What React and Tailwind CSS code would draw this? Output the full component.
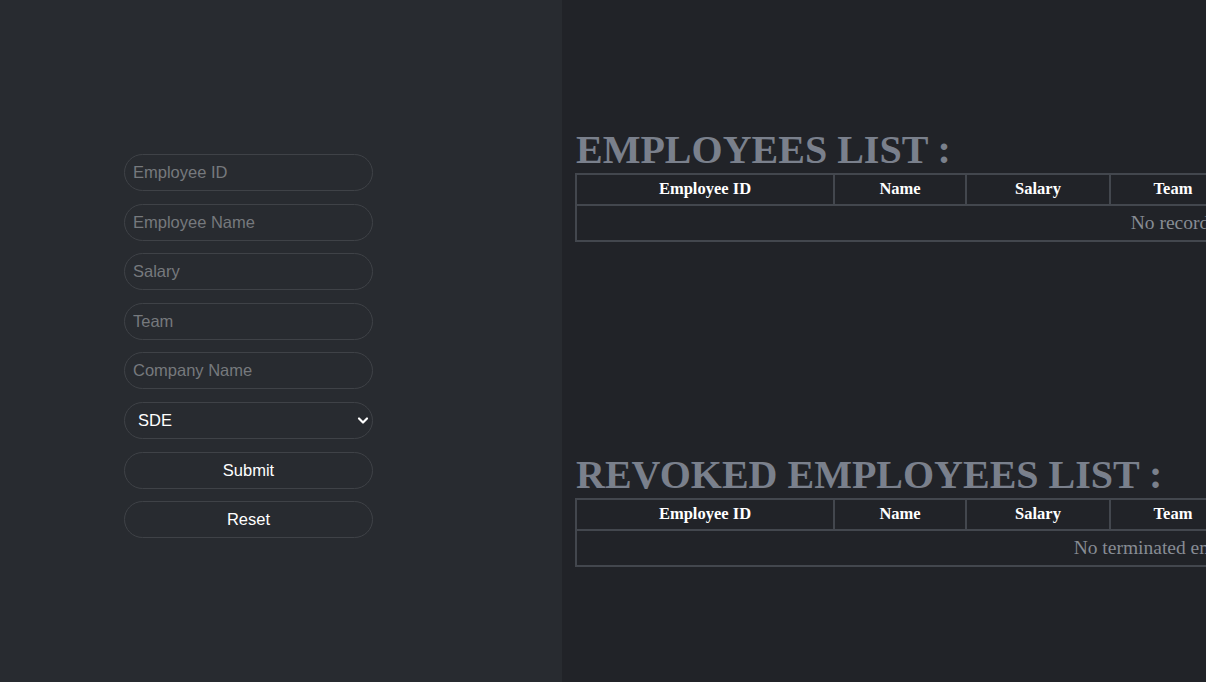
import React from "react";

const cols = [
  { label: "Employee ID", w: 258 },
  { label: "Name", w: 132 },
  { label: "Salary", w: 144 },
  { label: "Team", w: 126 },
  { label: "Company Name", w: 200 },
  { label: "Designation", w: 186 },
  { label: "Actions", w: 200 },
];

function Table({ empty }) {
  return (
    <table className="border-collapse border-2 border-[#43474e] table-fixed w-[1246px] shrink-0 -ml-px">
      <colgroup>
        {cols.map((c) => (
          <col key={c.label} style={{ width: c.w }} />
        ))}
      </colgroup>
      <thead>
        <tr>
          {cols.map((c) => (
            <th
              key={c.label}
              className="border-2 border-[#43474e] h-[31px] p-0 text-[16.5px] font-bold text-white text-center whitespace-nowrap"
            >
              {c.label}
            </th>
          ))}
        </tr>
      </thead>
      <tbody>
        <tr>
          <td
            colSpan={cols.length}
            className="border-2 border-[#43474e] h-[36px] p-0 text-center text-[19.5px] text-[#878c94] whitespace-nowrap"
          >
            {empty}
          </td>
        </tr>
      </tbody>
    </table>
  );
}

function Field({ placeholder }) {
  return (
    <input
      placeholder={placeholder}
      className="w-[249px] h-[37px] rounded-full border border-[#3f4247] bg-transparent px-[8px] text-[16.5px] text-white placeholder:text-[#76797d] outline-none"
      style={{ fontFamily: '"Liberation Sans", Arial, sans-serif' }}
    />
  );
}

export default function App() {
  return (
    <div className="flex w-[1206px] h-[682px] overflow-hidden" style={{ fontFamily: '"Liberation Serif", "Times New Roman", serif' }}>
      <div className="w-[562px] shrink-0 bg-[#282b30] pt-[154px] pl-[124px]">
        <div className="flex flex-col gap-[12.6px]" style={{ fontFamily: '"Liberation Sans", Arial, sans-serif' }}>
          <Field placeholder="Employee ID" />
          <Field placeholder="Employee Name" />
          <Field placeholder="Salary" />
          <Field placeholder="Team" />
          <Field placeholder="Company Name" />
          <div className="relative w-[249px] h-[37px] rounded-full border border-[#3f4247] flex items-center pl-[13px] text-[16.5px] text-white">
            <span>SDE</span>
            <svg className="absolute right-[3px] top-[13px]" width="12" height="10" viewBox="0 0 12 10">
              <path d="M2 2.5 L6 6.5 L10 2.5" stroke="white" strokeWidth="2.2" fill="none" strokeLinecap="round" strokeLinejoin="round" />
            </svg>
          </div>
          <button className="w-[249px] h-[37px] rounded-full border border-[#3f4247] bg-transparent text-[16.5px] text-white">
            Submit
          </button>
          <button className="w-[249px] h-[37px] rounded-full border border-[#3f4247] bg-transparent text-[16.5px] text-white">
            Reset
          </button>
        </div>
      </div>
      <div className="flex-1 bg-[#212328] overflow-hidden pl-[14px] pt-[126px] flex flex-col">
        <h1 className="m-0 text-[40px] font-bold leading-[47px] text-[#7a808c] whitespace-nowrap">EMPLOYEES LIST :</h1>
        <Table empty="No records found" />
        <h1 className="mt-[209px] text-[40px] font-bold leading-[47px] text-[#7a808c] whitespace-nowrap">REVOKED EMPLOYEES LIST :</h1>
        <Table empty="No terminated employees found" />
      </div>
    </div>
  );
}
